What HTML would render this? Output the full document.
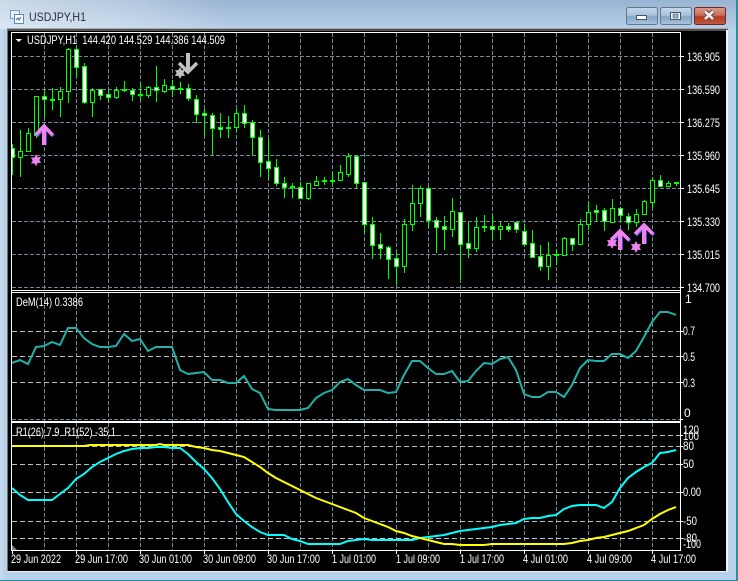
<!DOCTYPE html>
<html><head><meta charset="utf-8"><style>
html,body{margin:0;padding:0;width:738px;height:581px;overflow:hidden;background:#b8d2ec}
svg{display:block;position:absolute;left:0;top:0}
text{font-family:"Liberation Sans",Arial,sans-serif;font-size:12px;fill:#fff}
</style></head><body>
<svg width="738" height="581" viewBox="0 0 738 581" xmlns="http://www.w3.org/2000/svg">
<defs>
<linearGradient id="tb" x1="0" y1="0" x2="0" y2="1"><stop offset="0" stop-color="#98b3d2"/><stop offset="1" stop-color="#b7cfe9"/></linearGradient>
<linearGradient id="lf" x1="0" y1="0" x2="1" y2="0"><stop offset="0" stop-color="#fff" stop-opacity=".5"/><stop offset=".6" stop-color="#fff" stop-opacity=".25"/><stop offset="1" stop-color="#fff" stop-opacity="0"/></linearGradient>
<linearGradient id="bt" x1="0" y1="0" x2="0" y2="1"><stop offset="0" stop-color="#c4d8ec"/><stop offset=".45" stop-color="#a9c3de"/><stop offset=".55" stop-color="#86a5c6"/><stop offset="1" stop-color="#a8c4e0"/></linearGradient>
<linearGradient id="cl" x1="0" y1="0" x2="0" y2="1"><stop offset="0" stop-color="#dc9c8c"/><stop offset=".45" stop-color="#c8705c"/><stop offset=".55" stop-color="#b03a24"/><stop offset="1" stop-color="#c25a42"/></linearGradient>
<clipPath id="c1"><rect x="12" y="33" width="668" height="257"/></clipPath>
<clipPath id="c2"><rect x="12" y="293" width="668" height="128"/></clipPath>
<clipPath id="c3"><rect x="12" y="423" width="668" height="127"/></clipPath>
</defs>

<!-- window frame -->
<rect width="738" height="581" fill="#b8d2ec"/>
<rect width="738" height="29" fill="url(#tb)"/>
<rect width="230" height="29" fill="url(#lf)"/>
<rect x="736" y="0" width="2" height="581" fill="#2a8c9c"/>
<rect x="0" y="580" width="738" height="1" fill="#2a8c9c"/>
<rect x="0" y="29" width="3" height="551" fill="#c4d8ec"/>

<!-- title icon + title -->
<rect x="10.5" y="10.5" width="9" height="8" fill="#e8f0fa" stroke="#7d9cc4"/>
<rect x="14.5" y="14.5" width="9" height="9" fill="#fff" stroke="#5f86bc"/>
<path d="M16 20l2-2 1 2 2-3" fill="none" stroke="#3a6ab0"/>
<text x="29" y="21" style="font-size:12px;fill:#2a2a44" textLength="57" lengthAdjust="spacingAndGlyphs">USDJPY,H1</text>

<!-- buttons -->
<rect x="626.5" y="7.5" width="31" height="17" rx="2" fill="url(#bt)" stroke="#64788e"/>
<rect x="636.5" y="15.5" width="10" height="4" fill="#fff" stroke="#44546a"/>
<rect x="660.5" y="7.5" width="31" height="17" rx="2" fill="url(#bt)" stroke="#64788e"/>
<rect x="670.5" y="12.5" width="10" height="7" fill="#fff" stroke="#44546a" stroke-width="1"/>
<rect x="673" y="14" width="5" height="4" fill="#9cb4cc" stroke="#44546a" stroke-width=".6"/>
<rect x="694.5" y="7.5" width="31" height="17" rx="2" fill="url(#cl)" stroke="#6e2a20"/>
<path d="M705 11.5l8 7.5M713 11.5l-8 7.5" stroke="#5a3a38" stroke-width="4.4" fill="none"/>
<path d="M705 11.5l8 7.5M713 11.5l-8 7.5" stroke="#f4f0f0" stroke-width="2.6" fill="none"/>

<!-- chart black -->
<rect x="7" y="28" width="721" height="1" fill="#a8a8a8"/>
<rect x="7" y="29" width="721" height="2" fill="#505050"/>
<rect x="7" y="29" width="1" height="543" fill="#707070"/>
<rect x="8" y="31" width="719" height="540" fill="#000"/>
<rect x="7" y="571" width="721" height="1" fill="#f0f4f8"/>
<rect x="726" y="30" width="2" height="542" fill="#f0f4f8"/>

<!-- grid -->
<g stroke="#778899" stroke-width="1" stroke-dasharray="4 2" fill="none">
<path clip-path="url(#c1)" d="M44.5 33V290M76.5 33V290M108.5 33V290M140.5 33V290M172.5 33V290M204.5 33V290M236.5 33V290M268.5 33V290M300.5 33V290M332.5 33V290M364.5 33V290M396.5 33V290M428.5 33V290M460.5 33V290M492.5 33V290M524.5 33V290M556.5 33V290M588.5 33V290M620.5 33V290M652.5 33V290"/>
<path clip-path="url(#c2)" d="M44.5 293V421M76.5 293V421M108.5 293V421M140.5 293V421M172.5 293V421M204.5 293V421M236.5 293V421M268.5 293V421M300.5 293V421M332.5 293V421M364.5 293V421M396.5 293V421M428.5 293V421M460.5 293V421M492.5 293V421M524.5 293V421M556.5 293V421M588.5 293V421M620.5 293V421M652.5 293V421"/>
<path clip-path="url(#c3)" d="M44.5 423V550M76.5 423V550M108.5 423V550M140.5 423V550M172.5 423V550M204.5 423V550M236.5 423V550M268.5 423V550M300.5 423V550M332.5 423V550M364.5 423V550M396.5 423V550M428.5 423V550M460.5 423V550M492.5 423V550M524.5 423V550M556.5 423V550M588.5 423V550M620.5 423V550M652.5 423V550"/>
<path d="M12 56.500H680M12 89.500H680M12 122.500H680M12 155.500H680M12 188.500H680M12 221.500H680M12 254.500H680M12 287.500H680M12 419.500H680"/>
</g>
<g stroke="#c0c0c0" stroke-width="1" stroke-dasharray="5 3" fill="none">
<path d="M12 331.500H680M12 356.500H680M12 382.500H680M12 435.500H680M12 446.500H680M12 464.500H680M12 492.500H680M12 521.500H680M12 538.500H680"/>
</g>

<!-- candles -->
<g clip-path="url(#c1)">
<path fill="none" stroke="#00ff00" d="M12.5 144V175M20.5 130V177M28.5 128V151M36.5 96V138M44.5 90V118M52.5 88V110M60.5 87V117M68.5 48V103M76.5 47V77M84.5 63V104M92.5 88V117M100.5 89V100M108.5 90V102M116.5 87V99M124.5 81V92M132.5 88V101M140.5 83V100M148.5 86V98M156.5 66V102M164.5 79V93M172.5 80V97M180.5 82V94M188.5 84V101M196.5 95V123M204.5 109V136M212.5 113V155M220.5 113V138M228.5 116V138M236.5 109V131M244.5 105V128M252.5 120V155M260.5 130V177M268.5 139V179M276.5 159V186M284.5 177V198M292.5 183V198M300.5 182V199M308.5 183V200M316.5 176V186M324.5 177V185M332.5 172V184M340.5 165V181M348.5 153V177M356.5 155V188M364.5 182V233M372.5 217V259M380.5 233V259M388.5 246V279M396.5 253V285M404.5 219V273M412.5 185V231M420.5 186V217M428.5 187V228M436.5 217V253M444.5 216V250M452.5 198V237M460.5 212V280M468.5 222V258M476.5 217V252M484.5 215V232M492.5 215V239M500.5 222V240M508.5 223V232M516.5 222V233M524.5 224V245M532.5 230V258M540.5 245V271M548.5 242V280M556.5 249V265M564.5 237V255M572.5 238V251M580.5 219V245M588.5 201V230M596.5 205V222M604.5 208V231M612.5 199V222M620.5 207V222M628.5 213V230M636.5 209V227M644.5 200V215M652.5 177V208M660.5 175V187M668.5 181V187M676.5 182V186"/>
<path fill="#000" stroke="#00ff00" d="M18.5 151.5h4v6h-4zM26.5 133.5h4v18h-4zM34.5 96.5h4v39h-4zM58.5 91.5h4v8h-4zM66.5 49.5h4v42h-4zM90.5 90.5h4v12h-4zM114.5 90.5h4v7h-4zM146.5 87.5h4v8h-4zM162.5 85.5h4v6h-4zM234.5 113.5h4v14h-4zM306.5 183.5h4v15h-4zM314.5 181.5h4v4h-4zM338.5 172.5h4v8h-4zM346.5 156.5h4v18h-4zM402.5 224.5h4v42h-4zM410.5 203.5h4v21h-4zM418.5 188.5h4v15h-4zM450.5 211.5h4v18h-4zM474.5 227.5h4v21h-4zM498.5 226.5h4v3h-4zM546.5 255.5h4v11h-4zM562.5 238.5h4v17h-4zM578.5 224.5h4v20h-4zM586.5 212.5h4v12h-4zM610.5 208.5h4v14h-4zM634.5 214.5h4v8h-4zM642.5 201.5h4v13h-4zM650.5 180.5h4v22h-4zM666.5 183.5h4v3h-4z"/>
<path fill="#fff" stroke="#00ff00" d="M10.5 148.5h4v9h-4zM42.5 96.5h4v3h-4zM74.5 49.5h4v18h-4zM82.5 66.5h4v36h-4zM98.5 89.5h4v6h-4zM106.5 94.5h4v3h-4zM130.5 90.5h4v4h-4zM154.5 87.5h4v3h-4zM170.5 86.5h4v3h-4zM186.5 88.5h4v10h-4zM194.5 99.5h4v15h-4zM202.5 113.5h4v2h-4zM210.5 115.5h4v13h-4zM218.5 127.5h4v2h-4zM242.5 113.5h4v10h-4zM250.5 122.5h4v15h-4zM258.5 137.5h4v25h-4zM266.5 161.5h4v7h-4zM274.5 167.5h4v16h-4zM282.5 183.5h4v4h-4zM298.5 187.5h4v11h-4zM354.5 156.5h4v27h-4zM362.5 182.5h4v42h-4zM370.5 224.5h4v21h-4zM378.5 244.5h4v4h-4zM386.5 247.5h4v12h-4zM394.5 258.5h4v8h-4zM426.5 188.5h4v32h-4zM434.5 220.5h4v7h-4zM442.5 226.5h4v3h-4zM458.5 212.5h4v32h-4zM466.5 243.5h4v5h-4zM490.5 226.5h4v3h-4zM506.5 226.5h4v3h-4zM514.5 222.5h4v7h-4zM522.5 231.5h4v13h-4zM530.5 243.5h4v14h-4zM538.5 256.5h4v10h-4zM570.5 238.5h4v6h-4zM594.5 210.5h4v2h-4zM602.5 210.5h4v11h-4zM618.5 208.5h4v7h-4zM626.5 216.5h4v6h-4zM658.5 180.5h4v6h-4z"/>
<path fill="#00ff00" stroke="#00ff00" d="M50.5 99.5h4v1h-4zM122.5 89.5h4v1h-4zM138.5 94.5h4v1h-4zM178.5 88.5h4v1h-4zM226.5 127.5h4v1h-4zM290.5 186.5h4v1h-4zM322.5 180.5h4v1h-4zM330.5 180.5h4v1h-4zM482.5 226.5h4v1h-4zM554.5 254.5h4v1h-4zM674.5 182.5h4v1h-4z"/>
</g>

<!-- arrows -->
<g fill="none" stroke-linejoin="miter">
<path d="M45 127V145M36.500 136L45 127L53.500 136" stroke="#5a5ae0" stroke-width="3.500"/>
<path d="M44 126V145" stroke="#ee82ee" stroke-width="4"/>
<path d="M35.500 135L44 126L52.500 135" stroke="#ee82ee" stroke-width="3.500"/>
<path d="M621 232V250M612 241L621 232L630 241" stroke="#5a5ae0" stroke-width="3.500"/>
<path d="M620 231V250" stroke="#ee82ee" stroke-width="4"/>
<path d="M611 240L620 231L629 240" stroke="#ee82ee" stroke-width="3.500"/>
<path d="M645 226V244M636 235L645 226L654 235" stroke="#5a5ae0" stroke-width="3.500"/>
<path d="M644 225V244" stroke="#ee82ee" stroke-width="4"/>
<path d="M635 234L644 225L653 234" stroke="#ee82ee" stroke-width="3.500"/>
<path d="M188 53V72" stroke="#c0c0c0" stroke-width="4"/>
<path d="M179 63L188 72L197 63" stroke="#c0c0c0" stroke-width="3.500"/>
</g>
<!-- stars -->
<g fill="#ee82ee" stroke="#ee82ee" stroke-width=".8">
<path d="M36 155l1.400 2.600 2.900-.2-1.400 2.600 1.400 2.600-2.900-.2L36 165.400l-1.400-2.600-2.900.2 1.400-2.600-1.400-2.600 2.900.2z"/>
<path d="M612 238l1.400 2.600 2.900-.2-1.400 2.600 1.400 2.600-2.900-.2-1.400 2.600-1.400-2.600-2.900.2 1.400-2.600-1.400-2.600 2.900.2z"/>
<path d="M636 242l1.400 2.600 2.900-.2-1.400 2.600 1.400 2.600-2.900-.2-1.400 2.600-1.400-2.600-2.900.2 1.400-2.600-1.400-2.600 2.900.2z"/>
</g>
<path fill="#c0c0c0" stroke="#c0c0c0" stroke-width=".8" d="M180 68l1.400 2.600 2.900-.2-1.400 2.600 1.400 2.600-2.900-.2-1.400 2.600-1.400-2.600-2.900.2 1.400-2.600-1.400-2.600 2.900.2z"/>

<!-- DeM line -->
<polyline clip-path="url(#c2)" fill="none" stroke="#20b2aa" stroke-width="2" points="12,363 20,360 28,364 36,347 44,346 52,342 60,345 68,328 76,328 84,338 92,344 100,347 108,347 116,346 124,334 132,341 140,339 148,351 156,347 164,347 172,347 180,370 188,374 196,373 204,372 212,380 220,380 228,383 236,383 244,376 252,389 260,393 268,409 276,410 284,410 292,410 300,410 308,408 316,398 324,393 332,390 340,382 348,379 356,385 364,390 372,390 380,390 388,393 396,392 404,375 412,361 420,361 428,368 436,374 444,374 452,371 460,382 468,381 476,371 484,363 492,364 500,359 508,357 516,370 524,394 532,397 540,397 548,392 556,392 564,397 572,385 580,368 588,360 596,361 604,361 612,354 620,354 628,358 636,351 644,337 652,322 660,312 668,312 676,315"/>

<!-- R1 lines -->
<polyline clip-path="url(#c3)" fill="none" stroke="#00ffff" stroke-width="2" points="12,488 20,495 28,500 36,500 44,500 52,500 60,494 68,488 76,479 84,474 92,467 100,462 108,458 116,454 124,451 132,449 140,448 148,448 156,447 164,447 172,448 180,448 188,454 196,462 204,469 212,478 220,489 228,502 236,514 244,521 252,527 260,532 268,535 276,535 284,535 292,539 300,541 308,544 316,544 324,544 332,544 340,544 348,541 356,540 364,539 372,540 380,540 388,540 396,540 404,540 412,540 420,538 428,537 436,536 444,535 452,533 460,531 468,530 476,529 484,528 492,527 500,525 508,524 516,523 524,519 532,518 540,518 548,516 556,515 564,509 572,506 580,505 588,505 596,505 604,508 612,502 620,488 628,478 636,472 644,467 652,463 660,453 668,452 676,450"/>
<polyline clip-path="url(#c3)" fill="none" stroke="#ffff00" stroke-width="2" points="12,446 84,446 90,445 156,445 160,444 164,445 188,445 196,447 204,448 212,450 220,451 228,453 236,455 244,457 252,462 260,467 268,473 276,478 284,482 292,486 300,490 308,494 316,498 324,501 332,504 340,507 348,510 356,513 364,518 372,521 380,524 388,527 396,531 404,533 412,536 420,538 428,540 436,542 444,544 452,544 460,545 484,545 492,544 556,544 564,544 572,543 580,541 588,540 596,538 604,537 612,535 620,533 628,531 636,528 644,525 652,519 660,514 668,510 676,507"/>

<!-- white pane borders -->
<g fill="#fff">
<rect x="11" y="32" width="670" height="1"/>
<rect x="11" y="32" width="1" height="519"/>
<rect x="680" y="32" width="1" height="519"/>
<rect x="11" y="290" width="670" height="1"/>
<rect x="11" y="292" width="670" height="1"/>
<rect x="11" y="421" width="670" height="1"/>
<rect x="11" y="422" width="670" height="1"/>
<rect x="11" y="550" width="670" height="1"/>
</g>
<path d="M12 545l5 5h-5z" fill="#808890"/>

<!-- ticks -->
<path stroke="#fff" fill="none" d="M681 56.500h3M681 89.500h3M681 122.500h3M681 155.500h3M681 188.500h3M681 221.500h3M681 254.500h3M681 287.500h3M681 331.500h2M681 356.500h2M681 382.500h2M681 419.500h2M681 435.500h2M681 446.500h2M681 464.500h2M681 492.500h2M681 521.500h2M681 538.500h2M12.500 551v3M76.500 551v3M140.500 551v3M204.500 551v3M268.500 551v3M332.500 551v3M396.500 551v3M460.500 551v3M524.500 551v3M588.500 551v3M652.500 551v3"/>

<!-- labels -->
<path d="M15.500 39h6.500l-3.200 3z" fill="#fff"/>
<text x="27" y="44" textLength="198" lengthAdjust="spacingAndGlyphs" xml:space="preserve">USDJPY,H1  144.420 144.529 144.386 144.509</text>
<text x="16" y="306" textLength="67" lengthAdjust="spacingAndGlyphs">DeM(14) 0.3386</text>
<text x="16" y="436" textLength="100" lengthAdjust="spacingAndGlyphs" xml:space="preserve">R1(26) 7.9  R1(52) -35.1</text>

<g>
<text x="687" y="61" textLength="33" lengthAdjust="spacingAndGlyphs">136.905</text>
<text x="687" y="94" textLength="33" lengthAdjust="spacingAndGlyphs">136.590</text>
<text x="687" y="127" textLength="33" lengthAdjust="spacingAndGlyphs">136.275</text>
<text x="687" y="160" textLength="33" lengthAdjust="spacingAndGlyphs">135.960</text>
<text x="687" y="193" textLength="33" lengthAdjust="spacingAndGlyphs">135.645</text>
<text x="687" y="226" textLength="33" lengthAdjust="spacingAndGlyphs">135.330</text>
<text x="687" y="259" textLength="33" lengthAdjust="spacingAndGlyphs">135.015</text>
<text x="687" y="292" textLength="33" lengthAdjust="spacingAndGlyphs">134.700</text>
<text x="685" y="303">1</text>
<text x="683" y="335" textLength="12" lengthAdjust="spacingAndGlyphs">0.7</text>
<text x="683" y="361" textLength="12" lengthAdjust="spacingAndGlyphs">0.5</text>
<text x="683" y="387" textLength="12" lengthAdjust="spacingAndGlyphs">0.3</text>
<text x="684" y="417">0</text>
<text x="683" y="434" textLength="16" lengthAdjust="spacingAndGlyphs">120</text>
<text x="683" y="440" textLength="16" lengthAdjust="spacingAndGlyphs">100</text>
<text x="683" y="450" textLength="11" lengthAdjust="spacingAndGlyphs">80</text>
<text x="683" y="468" textLength="11" lengthAdjust="spacingAndGlyphs">50</text>
<text x="683" y="496" textLength="18" lengthAdjust="spacingAndGlyphs">0.00</text>
<text x="683" y="525" textLength="14" lengthAdjust="spacingAndGlyphs">-50</text>
<text x="683" y="542" textLength="14" lengthAdjust="spacingAndGlyphs">-80</text>
<text x="683" y="548" textLength="18" lengthAdjust="spacingAndGlyphs">-100</text>
</g>
<g>
<text x="11" y="563" textLength="50" lengthAdjust="spacingAndGlyphs">29 Jun 2022</text>
<text x="75" y="563" textLength="53" lengthAdjust="spacingAndGlyphs">29 Jun 17:00</text>
<text x="139" y="563" textLength="53" lengthAdjust="spacingAndGlyphs">30 Jun 01:00</text>
<text x="203" y="563" textLength="53" lengthAdjust="spacingAndGlyphs">30 Jun 09:00</text>
<text x="267" y="563" textLength="53" lengthAdjust="spacingAndGlyphs">30 Jun 17:00</text>
<text x="332" y="563" textLength="44" lengthAdjust="spacingAndGlyphs">1 Jul 01:00</text>
<text x="396" y="563" textLength="44" lengthAdjust="spacingAndGlyphs">1 Jul 09:00</text>
<text x="460" y="563" textLength="44" lengthAdjust="spacingAndGlyphs">1 Jul 17:00</text>
<text x="523" y="563" textLength="45" lengthAdjust="spacingAndGlyphs">4 Jul 01:00</text>
<text x="587" y="563" textLength="45" lengthAdjust="spacingAndGlyphs">4 Jul 09:00</text>
<text x="651" y="563" textLength="45" lengthAdjust="spacingAndGlyphs">4 Jul 17:00</text>
</g>
</svg>
</body></html>
